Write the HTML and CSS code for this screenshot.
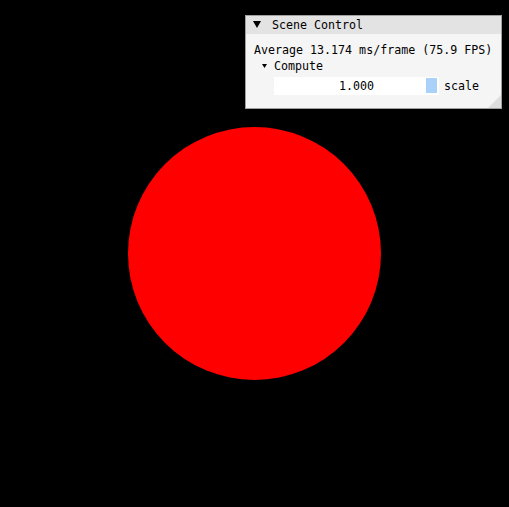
FILE: index.html
```html
<!DOCTYPE html>
<html>
<head>
<meta charset="utf-8">
<link rel="stylesheet" href="styles.css">
</head>
<body>
<div class="canvas">
  <div class="circle"></div>
</div>
<div class="panel">
  <div class="title">
    <svg class="arrow" width="8" height="7" viewBox="0 0 8 7"><polygon points="0,0 8,0 4,7" fill="#000"/></svg>
    <span class="title-text">Scene Control</span>
  </div>
  <div class="content">
    <div class="row">Average 13.174 ms/frame (75.9 FPS)</div>
    <div class="row tree">
      <svg class="tree-arrow" width="5" height="4" viewBox="0 0 5 4"><polygon points="0,0 5,0 2.5,4" fill="#000"/></svg>
      <span>Compute</span>
    </div>
    <div class="slider-row">
      <div class="slider">
        <span class="slider-value">1.000</span>
        <div class="grab"></div>
      </div>
      <span class="slider-label">scale</span>
    </div>
  </div>
  <div class="grip"></div>
</div>
</body>
</html>
```
FILE: styles.css
```css
html, body {
  margin: 0;
  padding: 0;
  background: #000;
  overflow: hidden;
}
body {
  width: 509px;
  height: 507px;
  font-family: "DejaVu Sans Mono", "Liberation Mono", monospace;
  font-size: 11.65px;
  color: #000;
}
.canvas {
  width: 509px;
  height: 507px;
  display: flex;
  align-items: center;
  justify-content: center;
}
.circle {
  width: 253px;
  height: 253px;
  border-radius: 50%;
  background: #ff0000;
}
.panel {
  position: absolute;
  left: 245px;
  top: 15px;
  width: 257px;
  height: 94px;
  box-sizing: border-box;
  border: 1px solid #a0a0a0;
  background: #f5f5f5;
}
.title {
  height: 18px;
  line-height: 18px;
  background: #e3e3e3;
  display: flex;
  align-items: center;
  padding-left: 7px;
}
.arrow {
  display: block;
  margin-top: -1px;
}
.title-text {
  margin-left: 11px;
}
.content {
  padding: 9px 0 0 8px;
  display: flex;
  flex-direction: column;
}
.row {
  height: 14px;
  line-height: 14px;
  white-space: pre;
}
.tree {
  margin-top: 2px;
  display: flex;
  align-items: center;
}
.tree-arrow {
  display: block;
  margin-left: 8px;
  margin-top: -1px;
}
.tree span {
  margin-left: 7px;
}
.slider-row {
  margin-top: 4px;
  margin-left: 20px;
  display: flex;
  align-items: flex-start;
}
.slider {
  position: relative;
  width: 165px;
  height: 18px;
  line-height: 18px;
  background: #fff;
  text-align: center;
}
.grab {
  position: absolute;
  right: 2px;
  top: 1px;
  width: 11px;
  height: 15px;
  background: #aad1fa;
}
.slider-label {
  margin-left: 5px;
  line-height: 18px;
}
.grip {
  position: absolute;
  right: 0;
  bottom: 0;
  width: 0;
  height: 0;
  border-style: solid;
  border-width: 0 0 13px 13px;
  border-color: transparent transparent #dedede transparent;
}
```
